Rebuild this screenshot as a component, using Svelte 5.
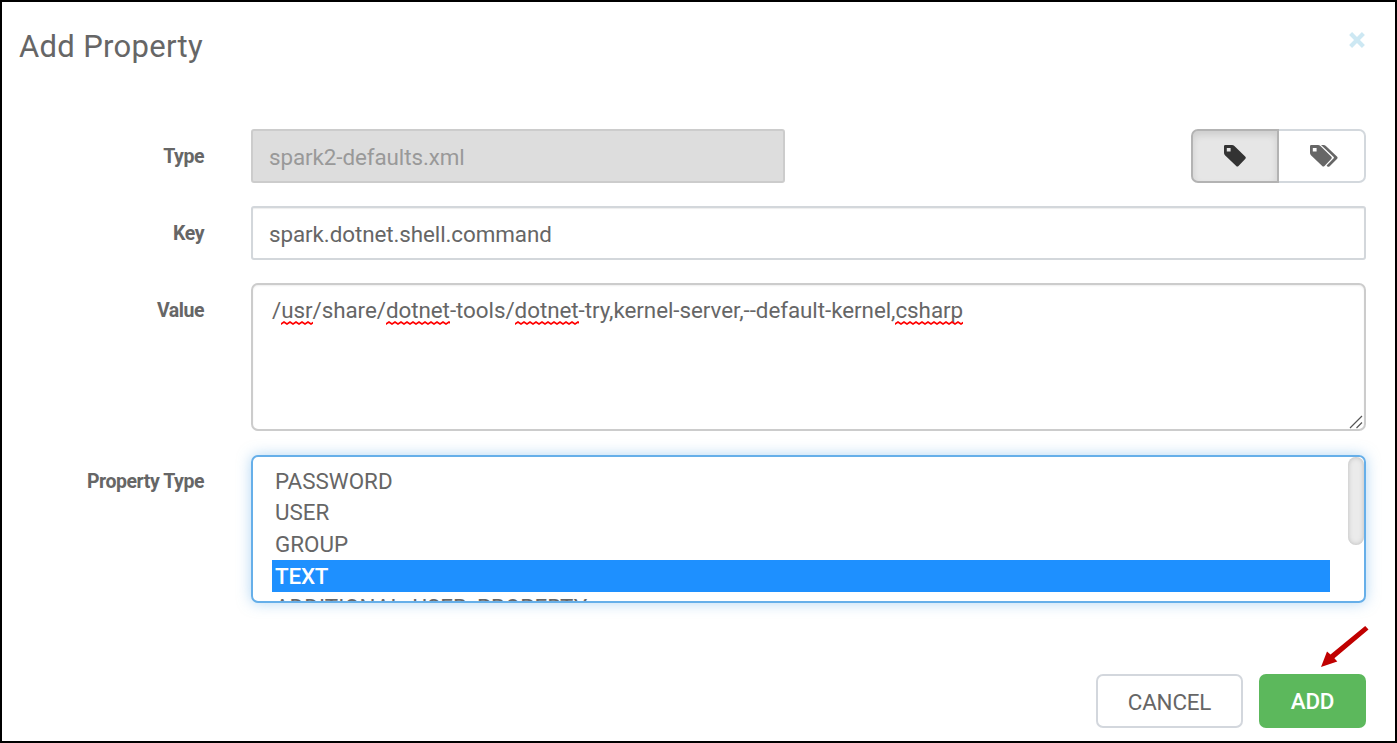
<script>
  const value = [
    { text: '/' }, { text: 'usr', flagged: true }, { text: '/share/' },
    { text: 'dotnet', flagged: true }, { text: '-tools/' },
    { text: 'dotnet', flagged: true }, { text: '-try,kernel-server,--default-kernel,' },
    { text: 'csharp', flagged: true }
  ];
  const options = ['PASSWORD', 'USER', 'GROUP', 'TEXT', 'ADDITIONAL_USER_PROPERTY'];
  let selected = $state('TEXT');
  let mode = $state('single');
</script>

<div class="modal">
  <header>
    <h1>Add Property</h1>
    <button class="close" aria-label="Close">
      <svg width="16" height="16" viewBox="0 0 16 16"><path d="M1.600 1.600 14.400 14.400M14.400 1.600 1.600 14.400" stroke="#cde8f3" stroke-width="4.200" fill="none" /></svg>
    </button>
  </header>

  <div class="form">
    <div class="row">
      <span class="label">Type</span>
      <div class="split">
        <div class="field disabled"><span>spark2-defaults.xml</span></div>
        <div class="toggle">
          <button class:active={mode === 'single'} aria-label="Single property" onclick={() => (mode = 'single')}>
            <svg width="30" height="24" viewBox="0 0 30 24"><path fill="currentColor" fill-rule="evenodd" d="M4 2.2Q4 1 5.200 1H12Q13.400 1 14.400 2L25.400 12.700Q26.300 13.800 25.400 14.800L18.500 22Q17.300 23 16.200 22L5.200 11.400Q4 10.200 4 9ZM6.800 4V7.600H10.600V4Z" /></svg>
          </button>
          <button class="bulk" class:active={mode === 'bulk'} aria-label="Bulk properties" onclick={() => (mode = 'bulk')}>
            <svg width="30" height="24" viewBox="0 0 30 24"><path fill="currentColor" fill-rule="evenodd" d="M1 2.200Q1 1 2.200 1H9Q10.400 1 11.400 2L22.400 12.700Q23.300 13.800 22.400 14.800L15.500 22Q14.300 23 13.200 22L2.200 11.400Q1 10.200 1 9ZM3.800 4V7.600H7.600V4Z" /><path fill="currentColor" d="M12 1H14.500Q15.900 1 16.900 2L28.200 12.800Q29.100 13.800 28.200 14.800L20.700 22.300Q19.300 23.400 18.200 22.300L17.600 21.600L24.700 14.200Q25.200 13.700 24.700 13.100Z" /></svg>
          </button>
        </div>
      </div>
    </div>

    <div class="row">
      <span class="label">Key</span>
      <div class="field"><span>spark.dotnet.shell.command</span></div>
    </div>

    <div class="row tall">
      <span class="label">Value</span>
      <div class="area">
        <span class="t-value">{#each value as part}<span class:flagged={part.flagged}>{part.text}</span>{/each}</span>
        <svg class="grip" width="14" height="14" viewBox="0 0 14 14"><path d="M1 13 13 1M7.500 13 13 7.500" stroke="#555" stroke-width="1.200" fill="none" /></svg>
      </div>
    </div>

    <div class="row tall">
      <span class="label ptype">Property Type</span>
      <div class="list" role="listbox" tabindex="0">
        <div class="options">
          {#each options as option}
            <button class="option" class:chosen={option === selected} role="option" aria-selected={option === selected} onclick={() => (selected = option)}>{option}</button>
          {/each}
        </div>
        <div class="thumb"></div>
      </div>
    </div>
  </div>

  <footer>
    <button class="btn cancel">CANCEL</button>
    <button class="btn add">ADD</button>
  </footer>
  <svg class="arrow" width="52" height="46" viewBox="0 0 52 46"><path fill="#c00000" d="M46.200 0 49.500 3.500 15.400 32.300 18.300 35.400 2 41 8 25.500 11.500 28.600Z" /></svg>
</div>

<style>
  :global(body) { margin: 0; background: #fff; }
  * { box-sizing: border-box; }
  button { font: inherit; color: inherit; margin: 0; padding: 0; border: 0; background: none; }
  svg { display: block; }
  .modal {
    position: relative; width: 1397px; height: 743px; border: 2px solid #000;
    overflow: hidden; background: #fff; color: #666; font: 22.400px Roboto, sans-serif;
    display: flex; flex-direction: column;
  }
  header { height: 127px; padding: 25px 30px 0 17px; display: flex; justify-content: space-between; align-items: flex-start; }
  h1 { margin: 0; font-size: 31px; line-height: 40px; font-weight: 400; letter-spacing: 0.320px; }
  .close { margin-top: 5px; }
  .form { display: flex; flex-direction: column; gap: 23px; padding-right: 29px; }
  .row { display: grid; grid-template-columns: 202px 1fr; grid-template-rows: 100%; column-gap: 47px; height: 54px; }
  .tall { height: 148px; }
  .tall + .tall { margin-top: 1px; }
  .label { text-align: right; font-size: 19.500px; font-weight: 700; line-height: 26px; padding-top: 15px; white-space: nowrap; letter-spacing: -0.450px; }
  .ptype { padding-top: 14px; }
  .split { display: flex; justify-content: space-between; }
  .field { border: 2px solid #d3d7db; border-radius: 3px; padding: 3px 16px 0; line-height: 47px; white-space: nowrap; box-shadow: inset 0 1px 1px #eee; letter-spacing: -0.080px; }
  .disabled { width: 534px; background: #ddd; border-color: #ccc; color: #999; box-shadow: none; }
  .toggle { display: flex; width: 175px; }
  .toggle button { width: 87px; display: grid; place-items: center; border: 2px solid #d3d8dd; border-left: 0; border-radius: 0 7px 7px 0; }
  .toggle button:first-child { width: 88px; border-left: 2px solid #d3d8dd; border-radius: 7px 0 0 7px; }
  .toggle .bulk { padding-left: 4px; }
  .toggle .active { background: #e6e6e6; border-color: #b3b3b3 !important; color: #333; box-shadow: inset 0 4px 7px rgba(0, 0, 0, 0.110); }
  .area { position: relative; border: 2px solid #ccc; border-radius: 7px; padding: 9px 19px; line-height: 32px; white-space: nowrap; box-shadow: inset 0 1px 2px #eee; }
  .t-value { letter-spacing: -0.055px; }
  .flagged { position: relative; display: inline-block; }
  .flagged::after {
    content: ''; position: absolute; left: 0; right: 0; bottom: 1px; height: 4px;
    background: url("data:image/svg+xml,%3Csvg xmlns='http://www.w3.org/2000/svg' width='6' height='4'%3E%3Cpath d='M-3 1 0 3 3 1 6 3 9 1' fill='none' stroke='red' stroke-width='1.700'/%3E%3C/svg%3E") repeat-x;
  }
  .grip { position: absolute; right: 1px; bottom: 0; }
  .list { display: flex; justify-content: space-between; overflow: hidden; border: 2px solid #66afe9; border-radius: 7px; padding-left: 19px; box-shadow: 0 0 14px rgba(102, 175, 233, 0.500); outline: 0; }
  .options { width: 1058px; padding-top: 9px; }
  .option { display: block; width: 100%; height: 31.400px; line-height: 31.400px; padding-left: 3px; text-align: left; }
  .chosen { background: #1e90ff; color: #fff; font-weight: 500; line-height: 32.400px; letter-spacing: -0.200px; }
  .thumb { width: 16px; height: 88px; border-radius: 8px; background: #ebebeb; box-shadow: inset 0 0 5px #bbb; }
  footer { display: flex; justify-content: flex-end; gap: 16px; padding: 71px 29px 0 0; }
  .btn { height: 54px; border-radius: 7px; line-height: 54px; }
  .cancel { width: 147px; border: 2px solid #d3d7dd; padding-top: 1px; line-height: 51px; letter-spacing: -0.200px; }
  .add { width: 107px; background: #5cb85c; color: #fff; font-weight: 500; line-height: 55px; letter-spacing: -0.200px; }
  .arrow { position: absolute; left: 1317px; top: 624px; }
</style>
